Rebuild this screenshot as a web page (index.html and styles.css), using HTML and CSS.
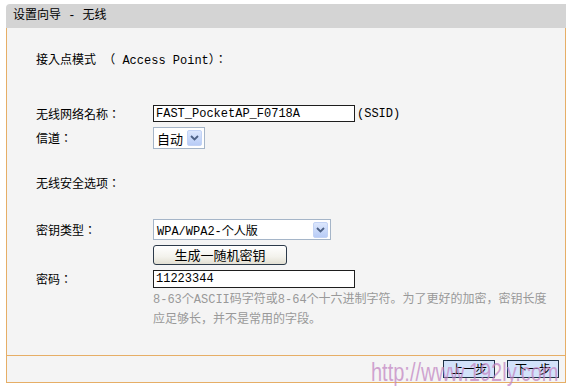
FILE: index.html
```html
<html>
    <head>
        <meta charset="utf-8">
        <link rel="stylesheet" href="styles.css">
    </head>
    <body>
        <div class="wizard">
            <div class="title">设置向导 - 无线</div>

            <div class="panel">
                <div class="row heading">接入点模式 （ Access Point）：</div>

                <div class="row ssid">
                    <span class="label">无线网络名称：</span>
                    <input type="text" class="field" value="FAST_PocketAP_F0718A" />
                    <span class="note">(SSID)</span>
                </div>

                <div class="row channel">
                    <span class="label">信道：</span>
                    <div class="select small">
                        <span class="value">自动</span>
                        <span class="arrow">
                            <svg width="9" height="6" viewBox="0 0 9 6"><path d="M1 1 L4.5 4.5 L8 1" fill="none" stroke="#4d6185" stroke-width="1.8"/></svg>
                        </span>
                    </div>
                </div>

                <div class="row security">无线安全选项：</div>

                <div class="row keytype">
                    <span class="label">密钥类型：</span>
                    <div class="select wide">
                        <span class="value">WPA/WPA2-个人版</span>
                        <span class="arrow">
                            <svg width="9" height="6" viewBox="0 0 9 6"><path d="M1 1 L4.5 4.5 L8 1" fill="none" stroke="#4d6185" stroke-width="1.8"/></svg>
                        </span>
                    </div>
                </div>

                <div class="row genkey">
                    <span class="label"></span>
                    <button class="gen">生成一随机密钥</button>
                </div>

                <div class="row password">
                    <span class="label">密码：</span>
                    <input type="text" class="field" value="11223344" />
                </div>

                <div class="help">8-63个ASCII码字符或8-64个十六进制字符。为了更好的加密，密钥长度应足够长，并不是常用的字段。</div>
            </div>

            <div class="footer">
                <button class="nav">上一步</button>
                <button class="nav">下一步</button>
            </div>
        </div>

        <div class="watermark">http://www.192ly.com</div>
    </body>
</html>
```

FILE: styles.css
```css
body {
    margin: 0;
    background-color: #ffffff;
    font-family: "Liberation Mono", "Noto Sans CJK JP", monospace;
    font-size: 12px;
    color: #000;
}
.wizard {
    margin: 4px 0 0 6px;
    width: 560px;
}
.title {
    height: 24px;
    line-height: 24px;
    padding-left: 7px;
    background-color: #d4d4d4;
    border-top-left-radius: 4px;
}
.panel {
    box-sizing: border-box;
    display: flow-root;
    height: 328px;
    padding-left: 29px;
    background-color: #f4f4f4;
    border: 1px solid #e6ae66;
    border-top: none;
}
.row {
    display: flex;
    align-items: center;
}
.label {
    width: 117px;
    flex-shrink: 0;
}
.heading {
    margin-top: 20px;
    height: 22px;
}
.ssid {
    margin-top: 35px;
    height: 17px;
}
.channel {
    margin-top: 5px;
    height: 22px;
}
.security {
    margin-top: 23px;
    height: 22px;
}
.keytype {
    margin-top: 25px;
    height: 21px;
}
.genkey {
    margin-top: 5px;
    height: 20px;
}
.password {
    margin-top: 5px;
    height: 18px;
}
.field {
    box-sizing: border-box;
    width: 202px;
    height: 17px;
    margin: 0;
    padding: 0 2px;
    border: 1px solid #1e1e1e;
    background: #fff;
    font-family: "Liberation Mono", "Noto Sans CJK JP", monospace;
    font-size: 12px;
    color: #000;
}
.password .field {
    height: 18px;
}
.note {
    margin-left: 2px;
}
.select {
    box-sizing: border-box;
    display: flex;
    align-items: center;
    justify-content: space-between;
    height: 100%;
    padding: 0 2px 0 3px;
    border: 1px solid #a5b5c8;
    background: #fff;
}
.select.small {
    width: 52px;
    font-size: 13px;
}
.select.wide {
    width: 178px;
}
.arrow {
    display: flex;
    align-items: center;
    justify-content: center;
    width: 15px;
    height: 16px;
    border-radius: 2px;
    background: linear-gradient(#dce7fd, #b8ccf6);
    border: 1px solid #c3d3f5;
    box-sizing: border-box;
}
.gen {
    box-sizing: border-box;
    width: 134px;
    height: 20px;
    padding: 0;
    border: 1px solid #2c3a4a;
    border-radius: 3px;
    background: linear-gradient(#ffffff, #f3f2ec 60%, #e2dfd2);
    font-family: "Noto Sans CJK SC", sans-serif;
    font-size: 13px;
    line-height: 16px;
    color: #000;
}
.help {
    width: 400px;
    margin: 2px 0 0 117px;
    line-height: 20px;
    color: #999;
}
.footer {
    box-sizing: border-box;
    display: flex;
    justify-content: flex-end;
    align-items: center;
    gap: 12px;
    height: 27px;
    padding-right: 6px;
    background-color: #f4f4f4;
    border: 1px solid #e6ae66;
    border-top: none;
}
.nav {
    box-sizing: border-box;
    width: 52px;
    height: 18px;
    padding: 0;
    border: 1px solid #1f3246;
    background-color: #d2e2fa;
    font-family: "Noto Sans CJK SC", sans-serif;
    font-size: 12px;
    line-height: 14px;
    color: #000;
}
.watermark {
    position: absolute;
    left: 371px;
    top: 358px;
    font-family: "Liberation Sans", Arial, sans-serif;
    font-size: 20px;
    color: rgba(195, 135, 195, 0.75);
    transform: scaleY(1.25);
    transform-origin: left top;
    pointer-events: none;
}
```
